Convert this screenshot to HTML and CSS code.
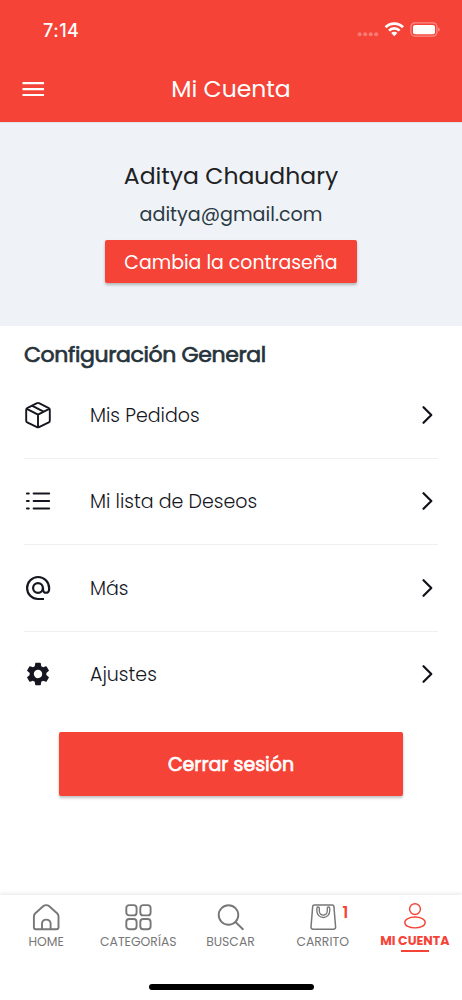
FILE: index.html
```html
<!DOCTYPE html>
<html lang="es">
<head>
<meta charset="utf-8">
<meta name="viewport" content="width=device-width">
<title>Mi Cuenta</title>
<link rel="stylesheet" href="styles.css">
</head>
<body>
<div class="app">
  <div class="top">
    <div class="status">
      <span class="time">7:14</span>
      <svg class="signals" width="84" height="18" viewBox="0 0 84 18" fill="#fff">
        <g opacity=".3"><circle cx="3.6" cy="13.2" r="2"/><circle cx="9.2" cy="13.2" r="2"/><circle cx="14.7" cy="13.2" r="2"/><circle cx="20.2" cy="13.2" r="2"/></g>
        <g fill="none" stroke="#fff" stroke-width="2.7"><path d="M29.6 6.2a12.3 12.3 0 0 1 17.4 0"/><path d="M33 9.6a7.5 7.5 0 0 1 10.6 0"/></g>
        <path d="M35.2 12.1a4.4 4.4 0 0 1 6.2 0L38.3 15.2z"/>
        <rect x="54.9" y="1.8" width="26" height="13.4" rx="4" fill="none" stroke="#fff" stroke-opacity=".4" stroke-width="1.2"/>
        <rect x="57" y="4" width="22" height="9.2" rx="2"/>
        <path d="M82.2 6.4v4.3q1.5-.6 1.5-2.1t-1.5-2.2z" opacity=".5"/>
      </svg>
    </div>
    <div class="bar">
      <svg class="menu" width="22" height="16" viewBox="0 0 22 16" stroke="#fff" stroke-width="2.2"><path d="M.5 2.1H22M.5 8.2H22M.5 14H22"/></svg>
      <h1 class="title">Mi Cuenta</h1>
    </div>
  </div>
  <section class="profile">
    <div class="name">Aditya Chaudhary</div>
    <div class="email">aditya@gmail.com</div>
    <button class="password">Cambia la contraseña</button>
  </section>
  <main class="settings">
    <h2 class="heading">Configuración General</h2>
    <div class="row">
      <svg class="icon" viewBox="0 0 28 28" fill="none" stroke="#15161f" stroke-width="1.9" stroke-linejoin="round" stroke-linecap="round"><path d="M13 2.2a2 2 0 0 1 2 0l9.8 4.9a1.8 1.8 0 0 1 1 1.6v11a1.8 1.8 0 0 1-1 1.6L15 26.1a2 2 0 0 1-2 0l-9.8-4.8a1.8 1.8 0 0 1-1-1.6v-11a1.8 1.8 0 0 1 1-1.6zM2.8 7.8 14 13.6l11.2-5.8M14 13.6v12.7M8.4 4.8l11.2 5.8"/></svg>
      <span class="label orders">Mis Pedidos</span>
      <svg class="chevron" viewBox="0 0 12 20"><path d="m2.5 2.2 7.8 7.8-7.8 7.8"/></svg>
    </div>
    <div class="row">
      <svg class="icon" viewBox="0 0 28 28" fill="none" stroke="#15161f" stroke-width="1.9" stroke-linecap="round"><path d="M9.6 6.5h15.6M9.6 14h15.6M9.6 21.5h15.6M2.9 6.5h1.9M2.9 14h1.9M2.9 21.5h1.9"/></svg>
      <span class="label wishes">Mi lista de Deseos</span>
      <svg class="chevron" viewBox="0 0 12 20"><path d="m2.5 2.2 7.8 7.8-7.8 7.8"/></svg>
    </div>
    <div class="row">
      <svg class="icon" viewBox="0 0 28 28" fill="none" stroke="#15161f" stroke-width="2.2"><circle cx="14" cy="14" r="4.9"/><path d="M20 25H14A11 11 0 1 1 25.1 14v1.7a3.05 3.05 0 0 1-6.1 0V14"/></svg>
      <span class="label more">Más</span>
      <svg class="chevron" viewBox="0 0 12 20"><path d="m2.5 2.2 7.8 7.8-7.8 7.8"/></svg>
    </div>
    <div class="row">
      <svg class="icon" viewBox="0 0 24 24" fill="#15161f"><path d="M19.14 12.94c.04-.3.06-.61.06-.94 0-.32-.02-.64-.07-.94l2.03-1.58a.49.49 0 0 0 .12-.61l-1.92-3.32a.488.488 0 0 0-.59-.22l-2.39.96c-.5-.38-1.03-.7-1.62-.94l-.36-2.54a.484.484 0 0 0-.48-.41h-3.84c-.24 0-.43.17-.47.41l-.36 2.54c-.59.24-1.13.57-1.62.94l-2.39-.96c-.22-.08-.47 0-.59.22L2.74 8.87c-.12.21-.08.47.12.61l2.03 1.58c-.05.3-.09.63-.09.94s.02.64.07.94l-2.03 1.58a.49.49 0 0 0-.12.61l1.92 3.32c.12.22.37.29.59.22l2.39-.96c.5.38 1.03.7 1.62.94l.36 2.54c.05.24.24.41.48.41h3.84c.24 0 .44-.17.47-.41l.36-2.54c.59-.24 1.13-.56 1.62-.94l2.39.96c.22.08.47 0 .59-.22l1.92-3.32c.12-.22.07-.47-.12-.61zM12 15.6A3.61 3.61 0 0 1 8.4 12c0-1.98 1.62-3.6 3.6-3.6s3.6 1.62 3.6 3.6-1.62 3.6-3.6 3.6z"/></svg>
      <span class="label adjust">Ajustes</span>
      <svg class="chevron" viewBox="0 0 12 20"><path d="m2.5 2.2 7.8 7.8-7.8 7.8"/></svg>
    </div>
    <button class="logout">Cerrar sesión</button>
  </main>
  <nav class="tabs">
    <div class="tab">
      <svg class="tab-icon" viewBox="0 0 30 30"><path d="M2.9 13.2a4 4 0 0 1 1.2-2.7l8-7.2a4.6 4.6 0 0 1 6.2 0l8 7.2a4 4 0 0 1 1.2 2.7v11a2 2 0 0 1-2 2H4.9a2 2 0 0 1-2-2zM11 26v-5.9a4.4 4.4 0 0 1 8.6 0V26"/></svg>
      <span class="tab-label home">HOME</span>
    </div>
    <div class="tab">
      <svg class="tab-icon" viewBox="0 0 30 30"><rect x="3.3" y="2.1" width="10.3" height="10.3" rx="3"/><rect x="17.3" y="2.1" width="10.3" height="10.3" rx="3"/><rect x="3.3" y="16" width="10.3" height="10.3" rx="3"/><rect x="17.3" y="16" width="10.3" height="10.3" rx="3"/></svg>
      <span class="tab-label categories">CATEGORÍAS</span>
    </div>
    <div class="tab">
      <svg class="tab-icon" viewBox="0 0 30 30"><circle cx="13.5" cy="12" r="9.8"/><path d="m20.5 19 7.4 7.2"/></svg>
      <span class="tab-label search">BUSCAR</span>
    </div>
    <div class="tab">
      <svg class="tab-icon bag" viewBox="0 0 30 30"><path d="M6.3 1.9h18a1.6 1.6 0 0 1 1.6 1.5l1.7 20.6a2 2 0 0 1-2 2.2H5a2 2 0 0 1-2-2.2L4.7 3.4a1.6 1.6 0 0 1 1.6-1.5z"/><path class="handle" d="M10.1 5.2v2.9a5.2 5.2 0 0 0 10.4 0V5.2"/><path class="handle-core" d="M10.1 5.2v2.9a5.2 5.2 0 0 0 10.4 0V5.2"/></svg>
      <span class="badge">1</span>
      <span class="tab-label cart">CARRITO</span>
    </div>
    <div class="tab active">
      <svg class="tab-icon person" viewBox="0 0 30 30"><circle cx="15" cy="6.1" r="5.4"/><path d="M4.8 19.5c0-3.3 4.5-5.5 10.2-5.5s10.2 2.2 10.2 5.5-4.5 5.4-10.2 5.4-10.2-2.1-10.2-5.4z"/></svg>
      <span class="tab-label account">MI CUENTA</span>
    </div>
  </nav>
  <div class="home-bar"></div>
</div>
</body>
</html>
```
FILE: styles.css
```css
* { box-sizing: border-box; }
body { margin: 0; background: #fff; font-family: Poppins, Inter, "Open Sans", sans-serif; }
svg { display: block; flex: none; }
.app { width: 462px; height: 1000px; display: flex; flex-direction: column; overflow: hidden; white-space: nowrap; }
.top { height: 122px; background: #f54337; color: #fff; flex: none; }
.status { height: 56px; padding: 21px 22px 0 43px; display: flex; justify-content: space-between; }
.time { font: 500 18px/19px Inter, sans-serif; letter-spacing: .5px; }
.bar { height: 66px; display: grid; grid-template-columns: 22px 1fr 22px; align-items: center; padding: 0 22px; }
.title { margin: 0; text-align: center; font-size: 23.5px; font-weight: 400; line-height: 30px; }
.profile { height: 204px; flex: none; background: #eff3f7; border-top: 1px solid #e2e4e7; display: flex; flex-direction: column; align-items: center; padding-top: 36px; }
.name { font-size: 23.5px; line-height: 34px; color: #202124; }
.email { font-size: 19.1px; line-height: 28px; margin-top: 8px; color: #2b3942; }
button { border: 0; border-radius: 2px; background: #f54337; color: #fff; font-family: inherit; box-shadow: 0 2px 3px rgba(0, 0, 0, .25); padding: 0; white-space: nowrap; }
.password { width: 252px; height: 43px; margin-top: 11px; padding-top: 1px; font-size: 18.9px; }
.settings { height: 569px; flex: none; padding: 12px 24px 0; }
.heading { margin: 0; height: 34px; font-size: 22px; line-height: 34px; font-weight: 400; letter-spacing: -.37px; color: #26333b; -webkit-text-stroke: .7px; }
.row { height: 86.5px; display: grid; grid-template-columns: 28px 1fr 12px; column-gap: 38px; align-items: center; padding-right: 5px; border-bottom: 1px solid #f0f0f2; }
.row:nth-of-type(4) { border-color: transparent; }
.icon { width: 28px; height: 28px; }
.label { font-size: 19px; line-height: 28px; color: #15161e; font-weight: 300; padding-top: 2px; }
.chevron { width: 12px; height: 20px; fill: none; stroke: #111219; stroke-width: 2.2; stroke-linecap: round; stroke-linejoin: round; }
.logout { display: block; width: 344px; height: 64px; margin: 14px auto 0; padding-top: 1px; font-size: 19px; font-weight: 400; -webkit-text-stroke: .7px; }
.tabs { height: 78px; flex: none; display: grid; grid-template-columns: repeat(5, 92.2px); box-shadow: 0 -2px 3px rgba(0, 0, 0, .07); }
.tab { position: relative; display: flex; flex-direction: column; align-items: center; padding-top: 8px; color: #777; }
.tab-icon { width: 30px; height: 30px; fill: none; stroke: #777; stroke-width: 1.9; stroke-linecap: round; stroke-linejoin: round; }
.bag { stroke-width: 1.5; }
.handle { stroke-width: 3.8; }
.handle-core { stroke: #fff; stroke-width: 1.1; }
.person { stroke: #f54337; stroke-width: 1.4; }
.tab-label { font-size: 12.4px; line-height: 16px; margin-top: 1px; }
.badge { position: absolute; left: 66px; top: 9px; font-size: 16px; line-height: 18px; font-weight: 600; color: #f54337; }
.active .tab-label { color: #f54337; font-size: 12.6px; font-weight: 700; margin-top: 0; }
.active::after { content: ""; width: 28px; height: 2.5px; margin-top: .5px; background: #f54337; }
.home-bar { width: 165px; height: 6px; border-radius: 3px; background: #000; margin: 11px auto 0; }
```
